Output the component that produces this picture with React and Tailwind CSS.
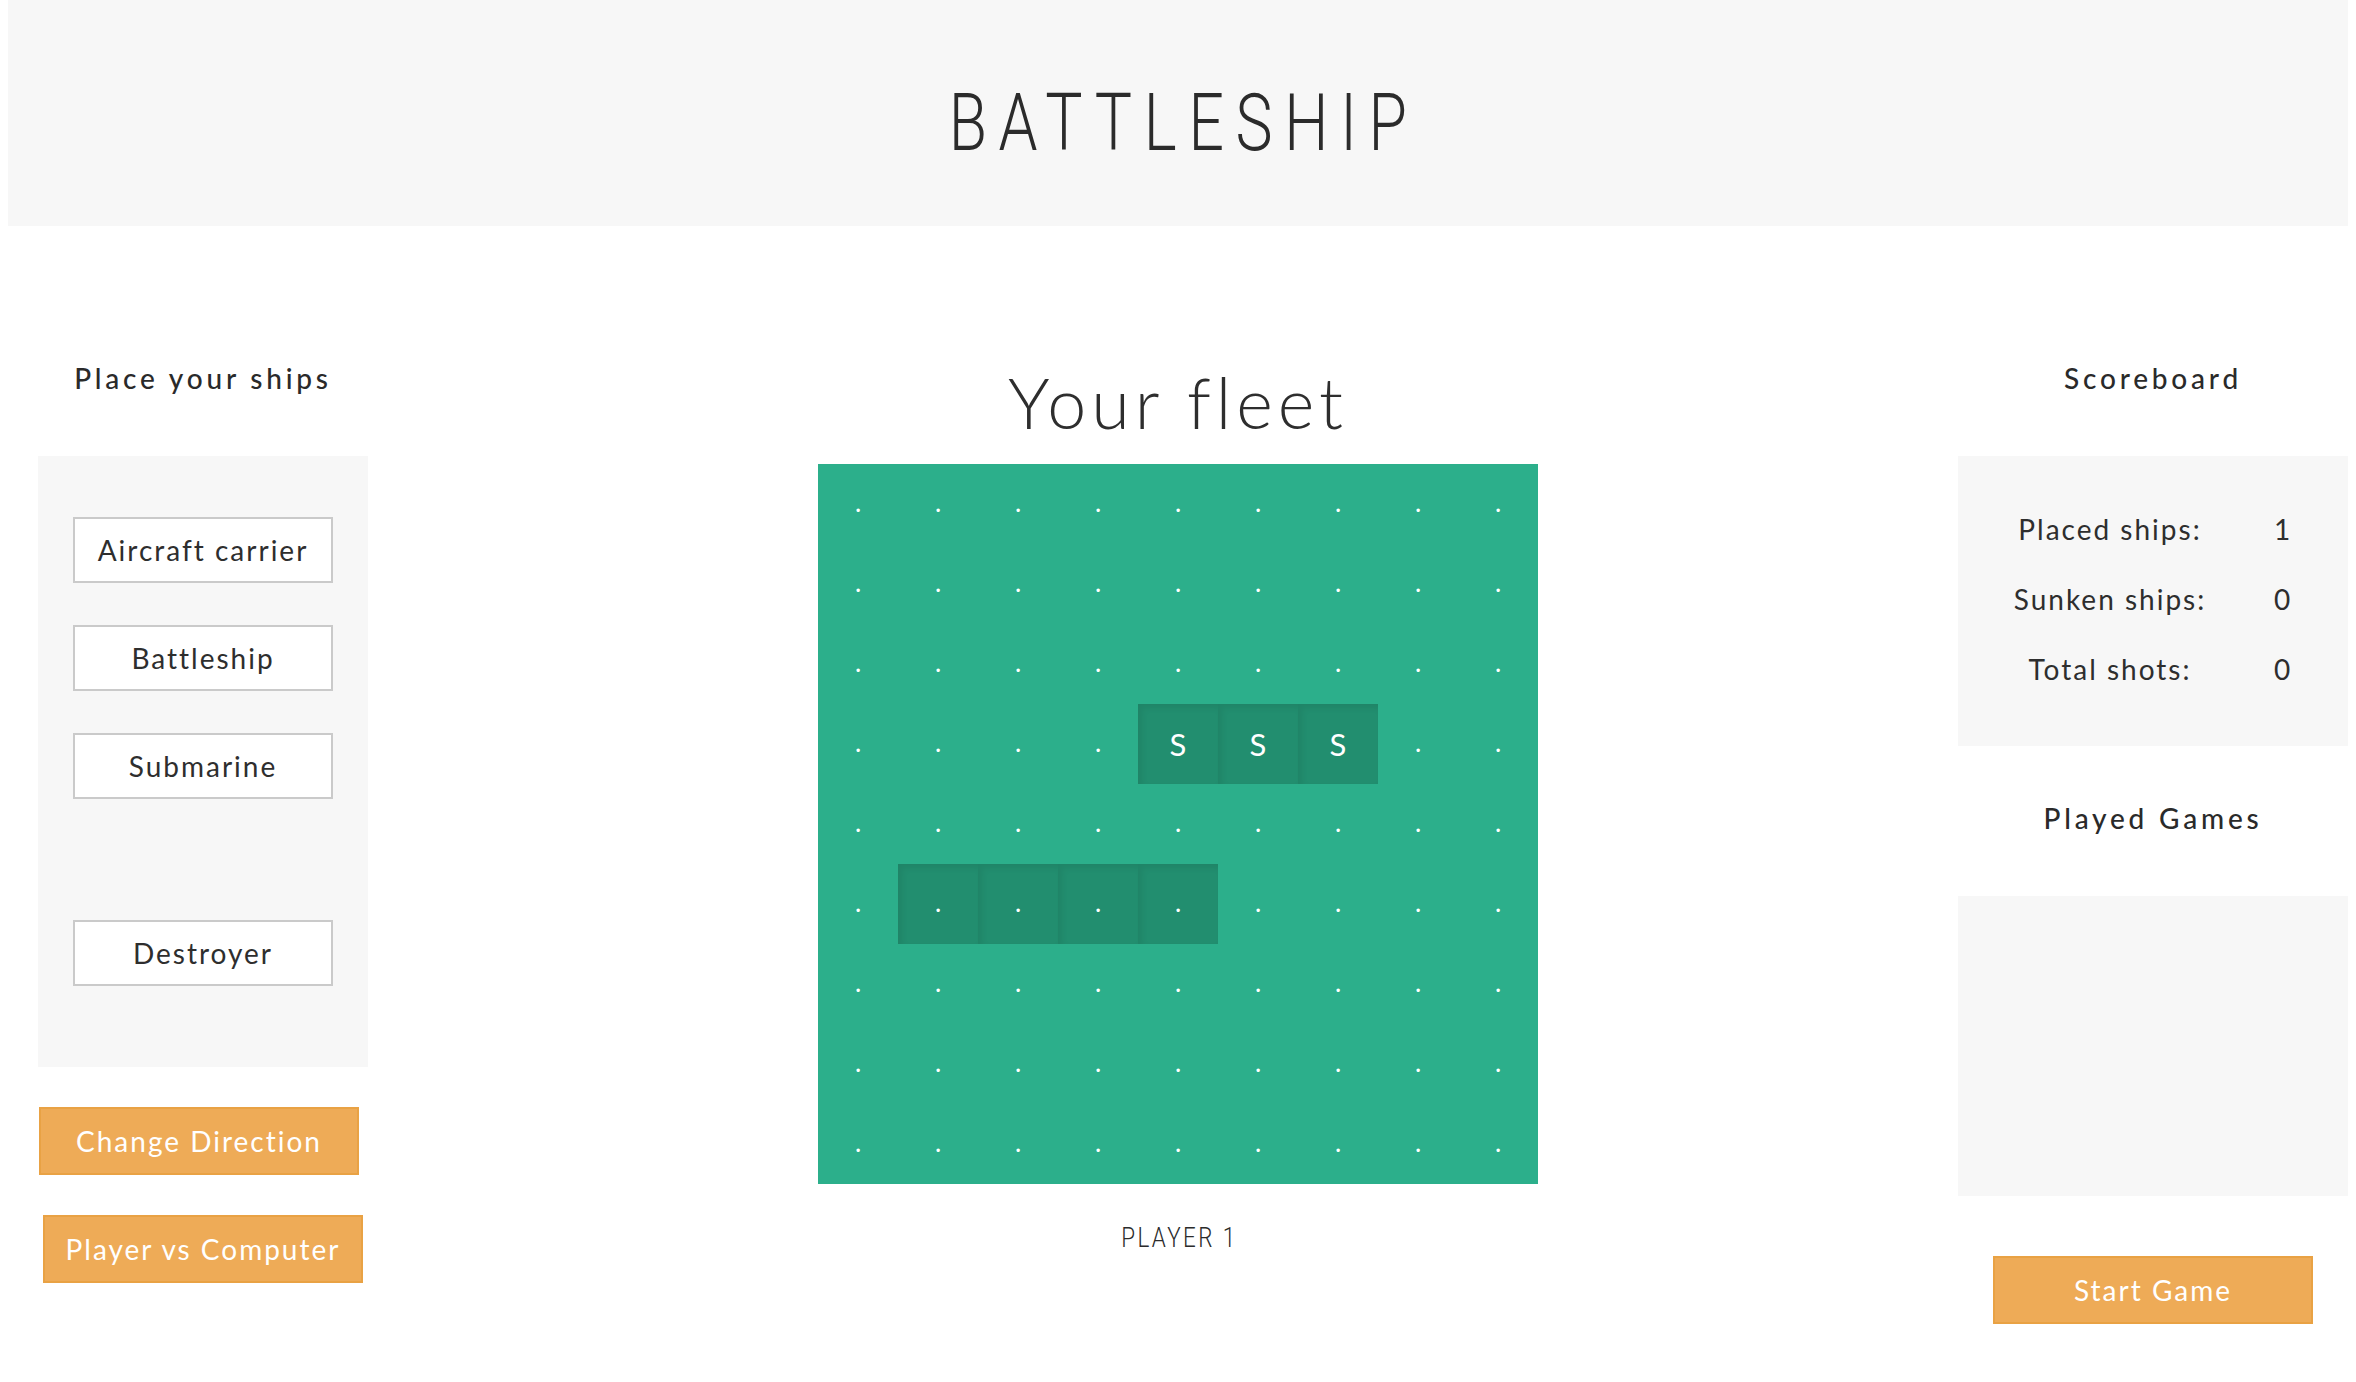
import React from 'react';

const SHIPS = ['Aircraft carrier', 'Battleship', 'Submarine'];

const SCORES = [
  { label: 'Placed ships:', value: 1 },
  { label: 'Sunken ships:', value: 0 },
  { label: 'Total shots:', value: 0 },
];

// 9x9 board: a placed sub (S S S) and a ship being dragged (dark cells, no letters)
const board = Array.from({ length: 9 }, (_, r) =>
  Array.from({ length: 9 }, (_, c) => {
    if (r === 3 && c >= 4 && c <= 6) return { ship: true, label: 'S' };
    if (r === 5 && c >= 1 && c <= 4) return { ship: true, label: '.' };
    return { ship: false, label: '.' };
  })
);

const ShipButton = ({ children, className = '' }) => (
  <button className={`block w-[260px] h-[66px] mx-auto bg-white border-2 border-[#cacaca] text-[28px] tracking-[2px] text-[#2e2e2e] ${className}`}>
    {children}
  </button>
);

const OrangeButton = ({ children, className = '' }) => (
  <button className={`block w-[320px] h-[68px] bg-[#eeab57] border-2 border-[#e9a244] text-white text-[28px] tracking-[2px] ${className}`}>
    {children}
  </button>
);

const Heading = ({ children, className = 'mt-[132px]' }) => (
  <h2 className={`${className} h-[40px] leading-[40px] text-center text-[28px] font-medium tracking-[3.8px] text-[#2a2a2a]`}>
    {children}
  </h2>
);

export default function App() {
  return (
    <div className="min-h-screen bg-white px-2 font-['Lato',sans-serif] text-[#333]">
      <header className="h-[226px] bg-[#f7f7f7] pt-[83px] text-center">
        <h1 className="inline-block pl-[15px] text-[80px] leading-[80px] font-light tracking-[15px] scale-x-[0.78] text-[#2b2b2b] font-['Roboto',sans-serif]">
          BATTLESHIP
        </h1>
      </header>

      <main className="grid grid-cols-[1fr_720px_1fr]">
        {/* left: ship placement */}
        <section className="ml-[30px] w-[330px]">
          <Heading>Place your ships</Heading>
          <div className="mt-[58px] bg-[#f7f7f7] pt-[61px] pb-[81px] flex flex-col gap-[42px]">
            {SHIPS.map(s => <ShipButton key={s}>{s}</ShipButton>)}
            <ShipButton className="mt-[79px]">Destroyer</ShipButton>
          </div>
          <OrangeButton className="mt-[40px] ml-[1px]">Change Direction</OrangeButton>
          <OrangeButton className="mt-[40px] ml-[5px]">Player vs Computer</OrangeButton>
        </section>

        {/* center: board */}
        <section>
          <h2 className="mt-[141px] h-[70px] leading-[70px] text-center text-[70px] font-light tracking-[5px] text-[#2e2e2e]">
            Your fleet
          </h2>
          <div className="mt-[27px] grid grid-cols-9 w-[720px] h-[720px] bg-[#2caf8b]">
            {board.flat().map((cell, i) => (
              <div
                key={i}
                className={`h-[80px] text-center leading-[80px] text-white ${cell.ship ? 'bg-[#228e6f] shadow-[inset_4px_4px_6px_rgba(0,0,0,0.07)]' : ''} ${cell.label === 'S' ? 'text-[31px]' : 'text-[22px] font-bold'}`}
              >
                {cell.label}
              </div>
            ))}
          </div>
          <p className="mt-[40px] text-center">
            <span className="inline-block pl-[3px] text-[28px] leading-[28px] font-light tracking-[3px] scale-x-[0.8] text-[#2b2b2b] font-['Roboto',sans-serif]">
              PLAYER 1
            </span>
          </p>
        </section>

        {/* right: scores */}
        <section className="justify-self-end w-[390px]">
          <Heading>Scoreboard</Heading>
          <div className="mt-[58px] bg-[#f7f7f7] pt-[53px] pb-[57px] pl-[50px]">
            <div className="grid grid-cols-[204px_86px] gap-x-[28px] gap-y-[30px] text-[28px] leading-[40px] tracking-[2px] text-[#2e2e2e]">
              {SCORES.map(s => (
                <React.Fragment key={s.label}>
                  <span className="text-center">{s.label}</span>
                  <span className="text-center">{s.value}</span>
                </React.Fragment>
              ))}
            </div>
          </div>
          <Heading className="mt-[52px]">Played Games</Heading>
          <div className="mt-[58px] h-[300px] bg-[#f7f7f7]" />
          <OrangeButton className="mt-[60px] mx-auto">Start Game</OrangeButton>
        </section>
      </main>
    </div>
  );
}
